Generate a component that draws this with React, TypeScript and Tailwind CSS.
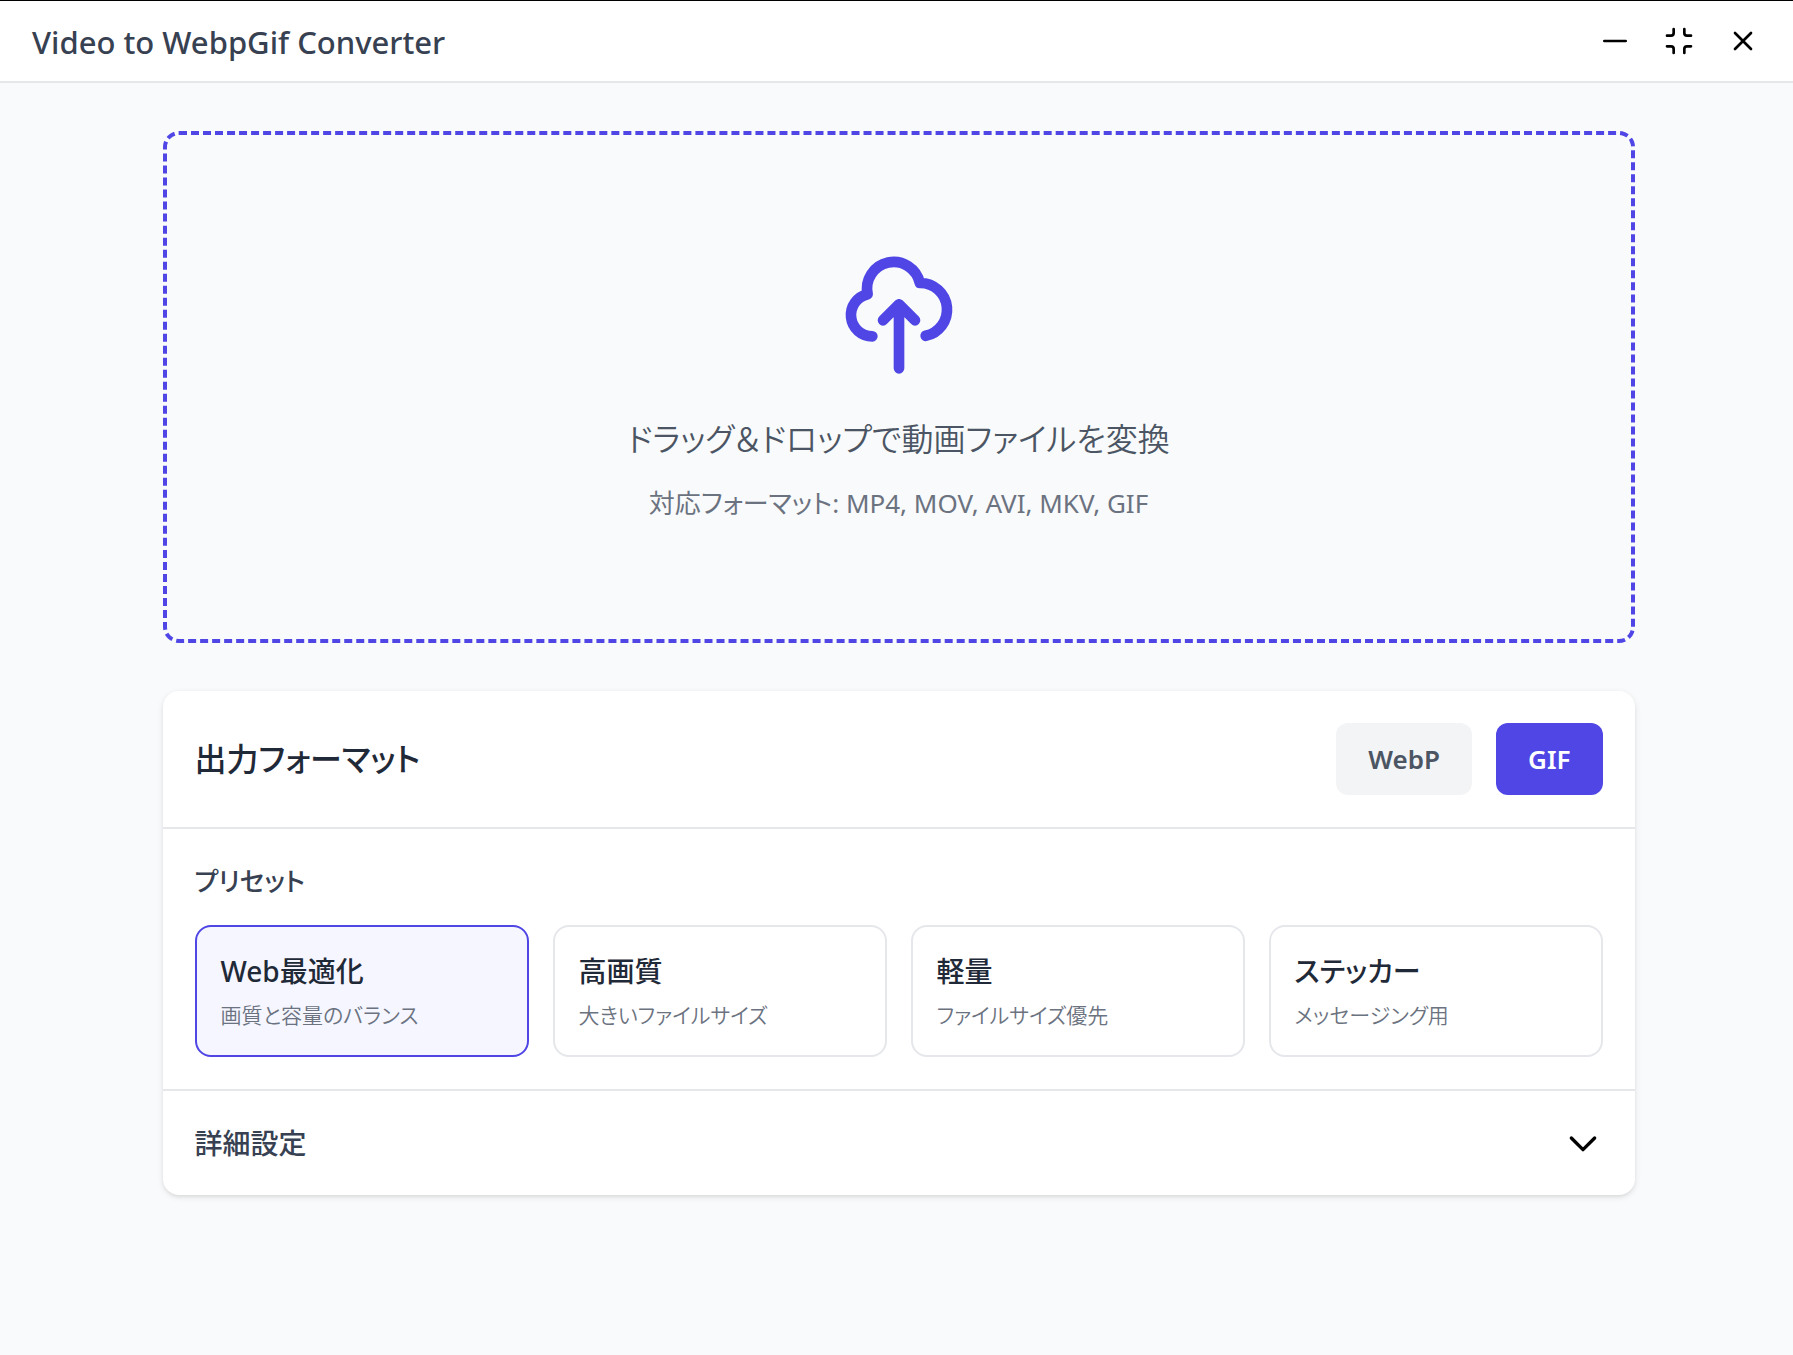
import { useState } from "react";
import type { ReactNode } from "react";

function Icon({ className, children }: { className: string; children: ReactNode }) {
  return (
    <svg
      className={className}
      viewBox="0 0 24 24"
      fill="none"
      stroke="currentColor"
      strokeWidth={2}
      strokeLinecap="round"
      strokeLinejoin="round"
      aria-hidden="true"
    >
      {children}
    </svg>
  );
}

function WindowButton({ label, children }: { label: string; children: ReactNode }) {
  return (
    <button type="button" aria-label={label} className="rounded-lg p-2 text-black hover:bg-gray-100">
      <Icon className="size-8">{children}</Icon>
    </button>
  );
}

function TitleBar() {
  return (
    <header className="flex h-[83px] items-center justify-between border-t border-b-2 border-t-black border-b-[#e5e7eb] bg-white pr-[26px] pl-8">
      <h1 className="pt-0.5 text-[31px] leading-10 font-medium text-[#374151]">Video to WebpGif Converter</h1>
      <div className="flex gap-4">
        <WindowButton label="最小化">
          <path d="M20 12H4" />
        </WindowButton>
        <WindowButton label="元に戻す">
          <path d="M8 3v3a2 2 0 0 1-2 2H3M21 8h-3a2 2 0 0 1-2-2V3M3 16h3a2 2 0 0 1 2 2v3M16 21v-3a2 2 0 0 1 2-2h3" />
        </WindowButton>
        <WindowButton label="閉じる">
          <path d="M6 18L18 6M6 6l12 12" />
        </WindowButton>
      </div>
    </header>
  );
}

function DropZone() {
  return (
    <label className="flex h-[512px] cursor-pointer flex-col items-center justify-center rounded-2xl border-4 border-dashed border-[#4f46e5] text-center">
      <input type="file" accept="video/*,image/gif" className="sr-only" />
      <Icon className="size-32 text-[#4f46e5]">
        <path d="M7 16a4 4 0 01-.88-7.903A5 5 0 1115.9 6L16 6a5 5 0 011 9.9M15 13l-3-3m0 0l-3 3m3-3v12" />
      </Icon>
      <span className="mt-8 text-[32px] leading-14 font-[350] text-[#4b5563]">ドラッグ＆ドロップで動画ファイルを変換</span>
      <span className="mt-4 text-[26px] leading-10 text-[#6b7280]">対応フォーマット: MP4, MOV, AVI, MKV, GIF</span>
    </label>
  );
}

const formats = ["WebP", "GIF"];

const presets = [
  { name: "Web最適化", note: "画質と容量のバランス" },
  { name: "高画質", note: "大きいファイルサイズ" },
  { name: "軽量", note: "ファイルサイズ優先" },
  { name: "ステッカー", note: "メッセージング用" },
];

export default function App() {
  const [format, setFormat] = useState("GIF");
  const [preset, setPreset] = useState("Web最適化");

  return (
    <div className="min-h-screen bg-[#f9fafb] font-['Noto_Sans','Noto_Sans_CJK_JP',sans-serif] [font-feature-settings:'palt']">
      <TitleBar />
      <main className="mx-auto max-w-[1536px] py-12 pr-[30px] pl-[34px]">
        <DropZone />
        <div className="mt-12 rounded-2xl bg-white shadow-[0_2px_6px_rgba(0,0,0,0.1),0_2px_4px_-2px_rgba(0,0,0,0.1)]">
          <section className="flex items-center justify-between border-b-2 border-[#e5e7eb] p-8">
            <h2 className="text-[32px] leading-14 font-medium text-[#1f2937]">出力フォーマット</h2>
            <div className="flex gap-6">
              {formats.map((name) => (
                <button
                  key={name}
                  type="button"
                  aria-pressed={name === format}
                  onClick={() => setFormat(name)}
                  className={
                    name === format
                      ? "rounded-xl bg-[#4f46e5] px-8 py-4 text-[26px] leading-10 font-semibold text-white"
                      : "rounded-xl bg-[#f3f4f6] px-8 py-4 text-[26px] leading-10 font-semibold text-[#4b5563]"
                  }
                >
                  {name}
                </button>
              ))}
            </div>
          </section>
          <section className="border-b-2 border-[#e5e7eb] p-8">
            <h3 className="mb-6 text-[26px] leading-10 font-medium text-[#374151]">プリセット</h3>
            <div className="grid grid-cols-4 gap-6">
              {presets.map(({ name, note }) => (
                <button
                  key={name}
                  type="button"
                  aria-pressed={name === preset}
                  onClick={() => setPreset(name)}
                  className={
                    name === preset
                      ? "rounded-2xl border-2 border-[#4f46e5] bg-[#f5f6ff] p-6 text-left"
                      : "rounded-2xl border-2 border-[#e5e7eb] bg-white p-6 text-left"
                  }
                >
                  <span className="block text-[28px] leading-10 font-medium text-[#1f2937]">{name}</span>
                  <span className="mt-2 block text-[21px] leading-8 font-[350] text-[#6b7280]">{note}</span>
                </button>
              ))}
            </div>
          </section>
          <button type="button" aria-expanded={false} className="flex w-full items-center justify-between p-8">
            <span className="text-[28px] leading-10 font-medium text-[#374151]">詳細設定</span>
            <Icon className="size-10 text-black">
              <path d="M19 9l-7 7-7-7" />
            </Icon>
          </button>
        </div>
      </main>
    </div>
  );
}
